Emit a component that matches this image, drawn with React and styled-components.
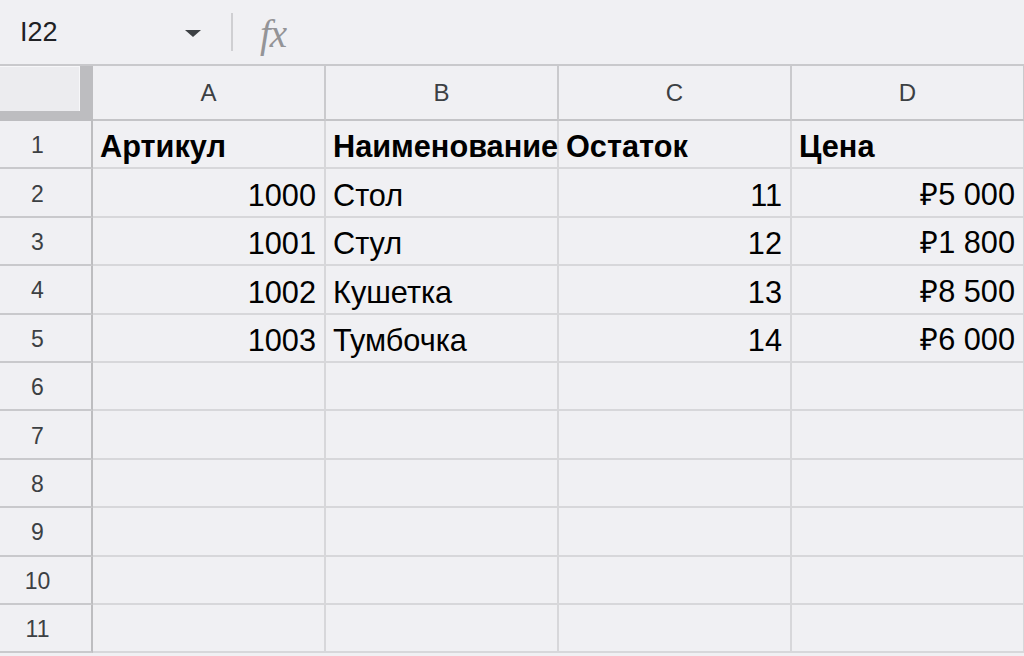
import React from 'react';
import styled, { createGlobalStyle } from 'styled-components';

const GlobalStyle = createGlobalStyle`
  html, body {
    margin: 0;
    padding: 0;
    background: #f0f0f3;
    font-family: "Liberation Sans", Arial, sans-serif;
    overflow: hidden;
  }
`;

const Sheet = styled.div`
  width: 1024px;
  height: 656px;
  overflow: hidden;
  background: #f0f0f3;
`;

const FormulaBar = styled.div`
  height: 64px;
  display: flex;
  align-items: center;
  border-bottom: 2px solid #c9c9cc;
`;

const NameBox = styled.div`
  width: 231px;
  display: flex;
  align-items: center;
  justify-content: space-between;
  padding: 0 30px 0 20px;
  box-sizing: border-box;
  font-size: 27px;
  color: #202124;
`;

const Caret = styled.span`
  width: 0;
  height: 0;
  border-left: 8px solid transparent;
  border-right: 8px solid transparent;
  border-top: 7px solid #3c4043;
  margin-top: 2px;
`;

const Divider = styled.span`
  width: 2px;
  height: 38px;
  background: #cfcfd2;
`;

const Fx = styled.span`
  margin-left: 27px;
  margin-top: 2px;
  font-family: "Liberation Serif", "Times New Roman", serif;
  font-style: italic;
  font-size: 39px;
  color: #949497;
  letter-spacing: -1px;
`;

const Grid = styled.div`
  display: grid;
  grid-template-columns: 93px repeat(4, 233px);
  grid-template-rows: 55px;
  grid-auto-rows: 48.4px;
`;

const Corner = styled.div`
  box-sizing: border-box;
  background: #bdbdc0;
  padding: 0 11px 10px 0;
  border-right: 2px solid #bdbdc0;

  div {
    height: 100%;
    background: #ececef;
    box-shadow: inset 0 1px 0 #f7f7f9, inset -1px 0 0 #f7f7f9;
  }
`;

const ColHead = styled.div`
  box-sizing: border-box;
  display: flex;
  align-items: center;
  justify-content: center;
  border-right: 2px solid #cacacd;
  border-bottom: 2px solid #c4c4c7;
  font-size: 24px;
  color: #3c4043;
`;

const RowHead = styled.div`
  box-sizing: border-box;
  display: flex;
  align-items: center;
  justify-content: center;
  padding: 3px 16px 0 0;
  border-right: 2px solid #bdbdc0;
  border-bottom: 2px solid #c9c9cc;
  font-size: 23px;
  color: #3c4043;
`;

const Cell = styled.div`
  box-sizing: border-box;
  display: flex;
  align-items: flex-end;
  justify-content: ${p => (p.$num ? 'flex-end' : 'flex-start')};
  padding: 0 ${p => (p.$num ? '8px' : '0')} 2px ${p => (p.$num ? '0' : '7px')};
  border-right: 2px solid #d7d7da;
  border-bottom: 2px solid #d7d7da;
  font-size: 30.7px;
  font-weight: ${p => (p.$bold ? 700 : 400)};
  color: #000;
  white-space: nowrap;
  overflow: visible;
`;

const columns = ['A', 'B', 'C', 'D'];

const rows = [
  [{ v: 'Артикул', bold: true }, { v: 'Наименование', bold: true }, { v: 'Остаток', bold: true }, { v: 'Цена', bold: true }],
  [{ v: '1000', num: true }, { v: 'Стол' }, { v: '11', num: true }, { v: '₽5 000', num: true }],
  [{ v: '1001', num: true }, { v: 'Стул' }, { v: '12', num: true }, { v: '₽1 800', num: true }],
  [{ v: '1002', num: true }, { v: 'Кушетка' }, { v: '13', num: true }, { v: '₽8 500', num: true }],
  [{ v: '1003', num: true }, { v: 'Тумбочка' }, { v: '14', num: true }, { v: '₽6 000', num: true }],
];

const App = () => {
  const allRows = Array.from({ length: 11 }, (_, i) => rows[i] || [{}, {}, {}, {}]);

  return (
    <Sheet>
      <GlobalStyle />
      <FormulaBar>
        <NameBox>
          <span>I22</span>
          <Caret />
        </NameBox>
        <Divider />
        <Fx>fx</Fx>
      </FormulaBar>
      <Grid>
        <Corner><div /></Corner>
        {columns.map(c => (
          <ColHead key={c}>{c}</ColHead>
        ))}
        {allRows.map((r, i) => (
          <React.Fragment key={i}>
            <RowHead>{i + 1}</RowHead>
            {r.map((cell, j) => (
              <Cell key={j} $num={cell.num} $bold={cell.bold}>{cell.v}</Cell>
            ))}
          </React.Fragment>
        ))}
      </Grid>
    </Sheet>
  );
};

export default App;
